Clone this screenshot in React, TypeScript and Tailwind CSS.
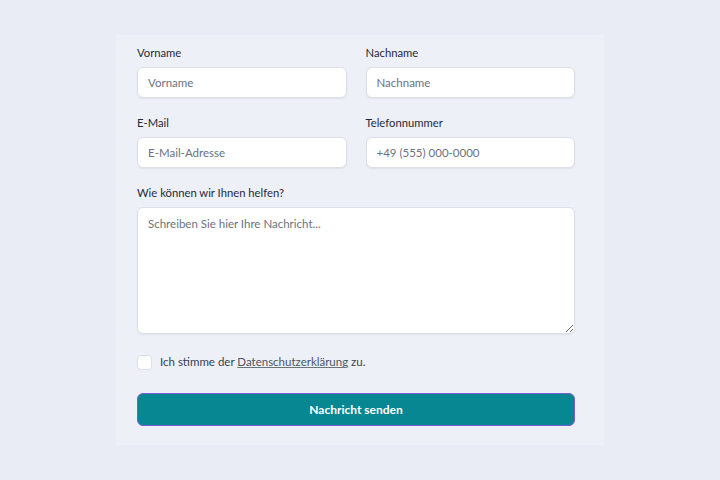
import React from "react";

const inputCls =
  "block w-full h-[31px] rounded-[6px] border border-[#dcdfe7] bg-white px-[10px] text-[11.5px] text-[#1f2937] placeholder:text-[#6b7280] shadow-[0_1px_2px_rgba(0,0,0,0.06)] outline-none";
const labelCls = "block h-[14px] text-[11.25px] leading-[14px] text-[#1f2937] mb-[7px]";

export default function App() {
  return (
    <div
      className="w-[720px] h-[480px] bg-[#e9ecf4] pt-[35px]"
      style={{ fontFamily: 'Lato, "Noto Sans", sans-serif' }}
    >
      <div className="mx-auto w-[488px] h-[410px] bg-[#edf0f7] pl-[21px] pr-[29px] pt-[11px]">
        <div className="grid grid-cols-2 gap-x-[19px] gap-y-[18px]">
          <div>
            <label className={labelCls}>Vorname</label>
            <input className={inputCls} placeholder="Vorname" />
          </div>
          <div>
            <label className={labelCls}>Nachname</label>
            <input className={inputCls} placeholder="Nachname" />
          </div>
          <div>
            <label className={labelCls}>E-Mail</label>
            <input className={inputCls} placeholder="E-Mail-Adresse" />
          </div>
          <div>
            <label className={labelCls}>Telefonnummer</label>
            <input className={inputCls} placeholder="+49 (555) 000-0000" />
          </div>
        </div>
        <div className="mt-[18px]">
          <label className={labelCls}>Wie können wir Ihnen helfen?</label>
          <textarea
            className="block w-full h-[127px] rounded-[6px] border border-[#dcdfe7] bg-white px-[10px] py-[7px] text-[11.5px] text-[#1f2937] placeholder:text-[#6b7280] shadow-[0_1px_2px_rgba(0,0,0,0.06)] outline-none"
            placeholder="Schreiben Sie hier Ihre Nachricht..."
          />
        </div>
        <div className="mt-[20px] flex items-center h-[16px]">
          <span className="block w-[15px] h-[15px] rounded-[4px] border border-[#dcdfe7] bg-white" />
          <span className="ml-[8px] text-[11.5px] text-[#374151]">
            Ich stimme der{" "}
            <span className="underline text-[#4b5563] decoration-[#6b7280]">Datenschutzerklärung</span> zu.
          </span>
        </div>
        <button className="mt-[23px] block w-full h-[33px] rounded-[6px] border border-[#7a5bd4] bg-[#068791] text-white text-[12px] font-bold">
          Nachricht senden
        </button>
      </div>
    </div>
  );
}
